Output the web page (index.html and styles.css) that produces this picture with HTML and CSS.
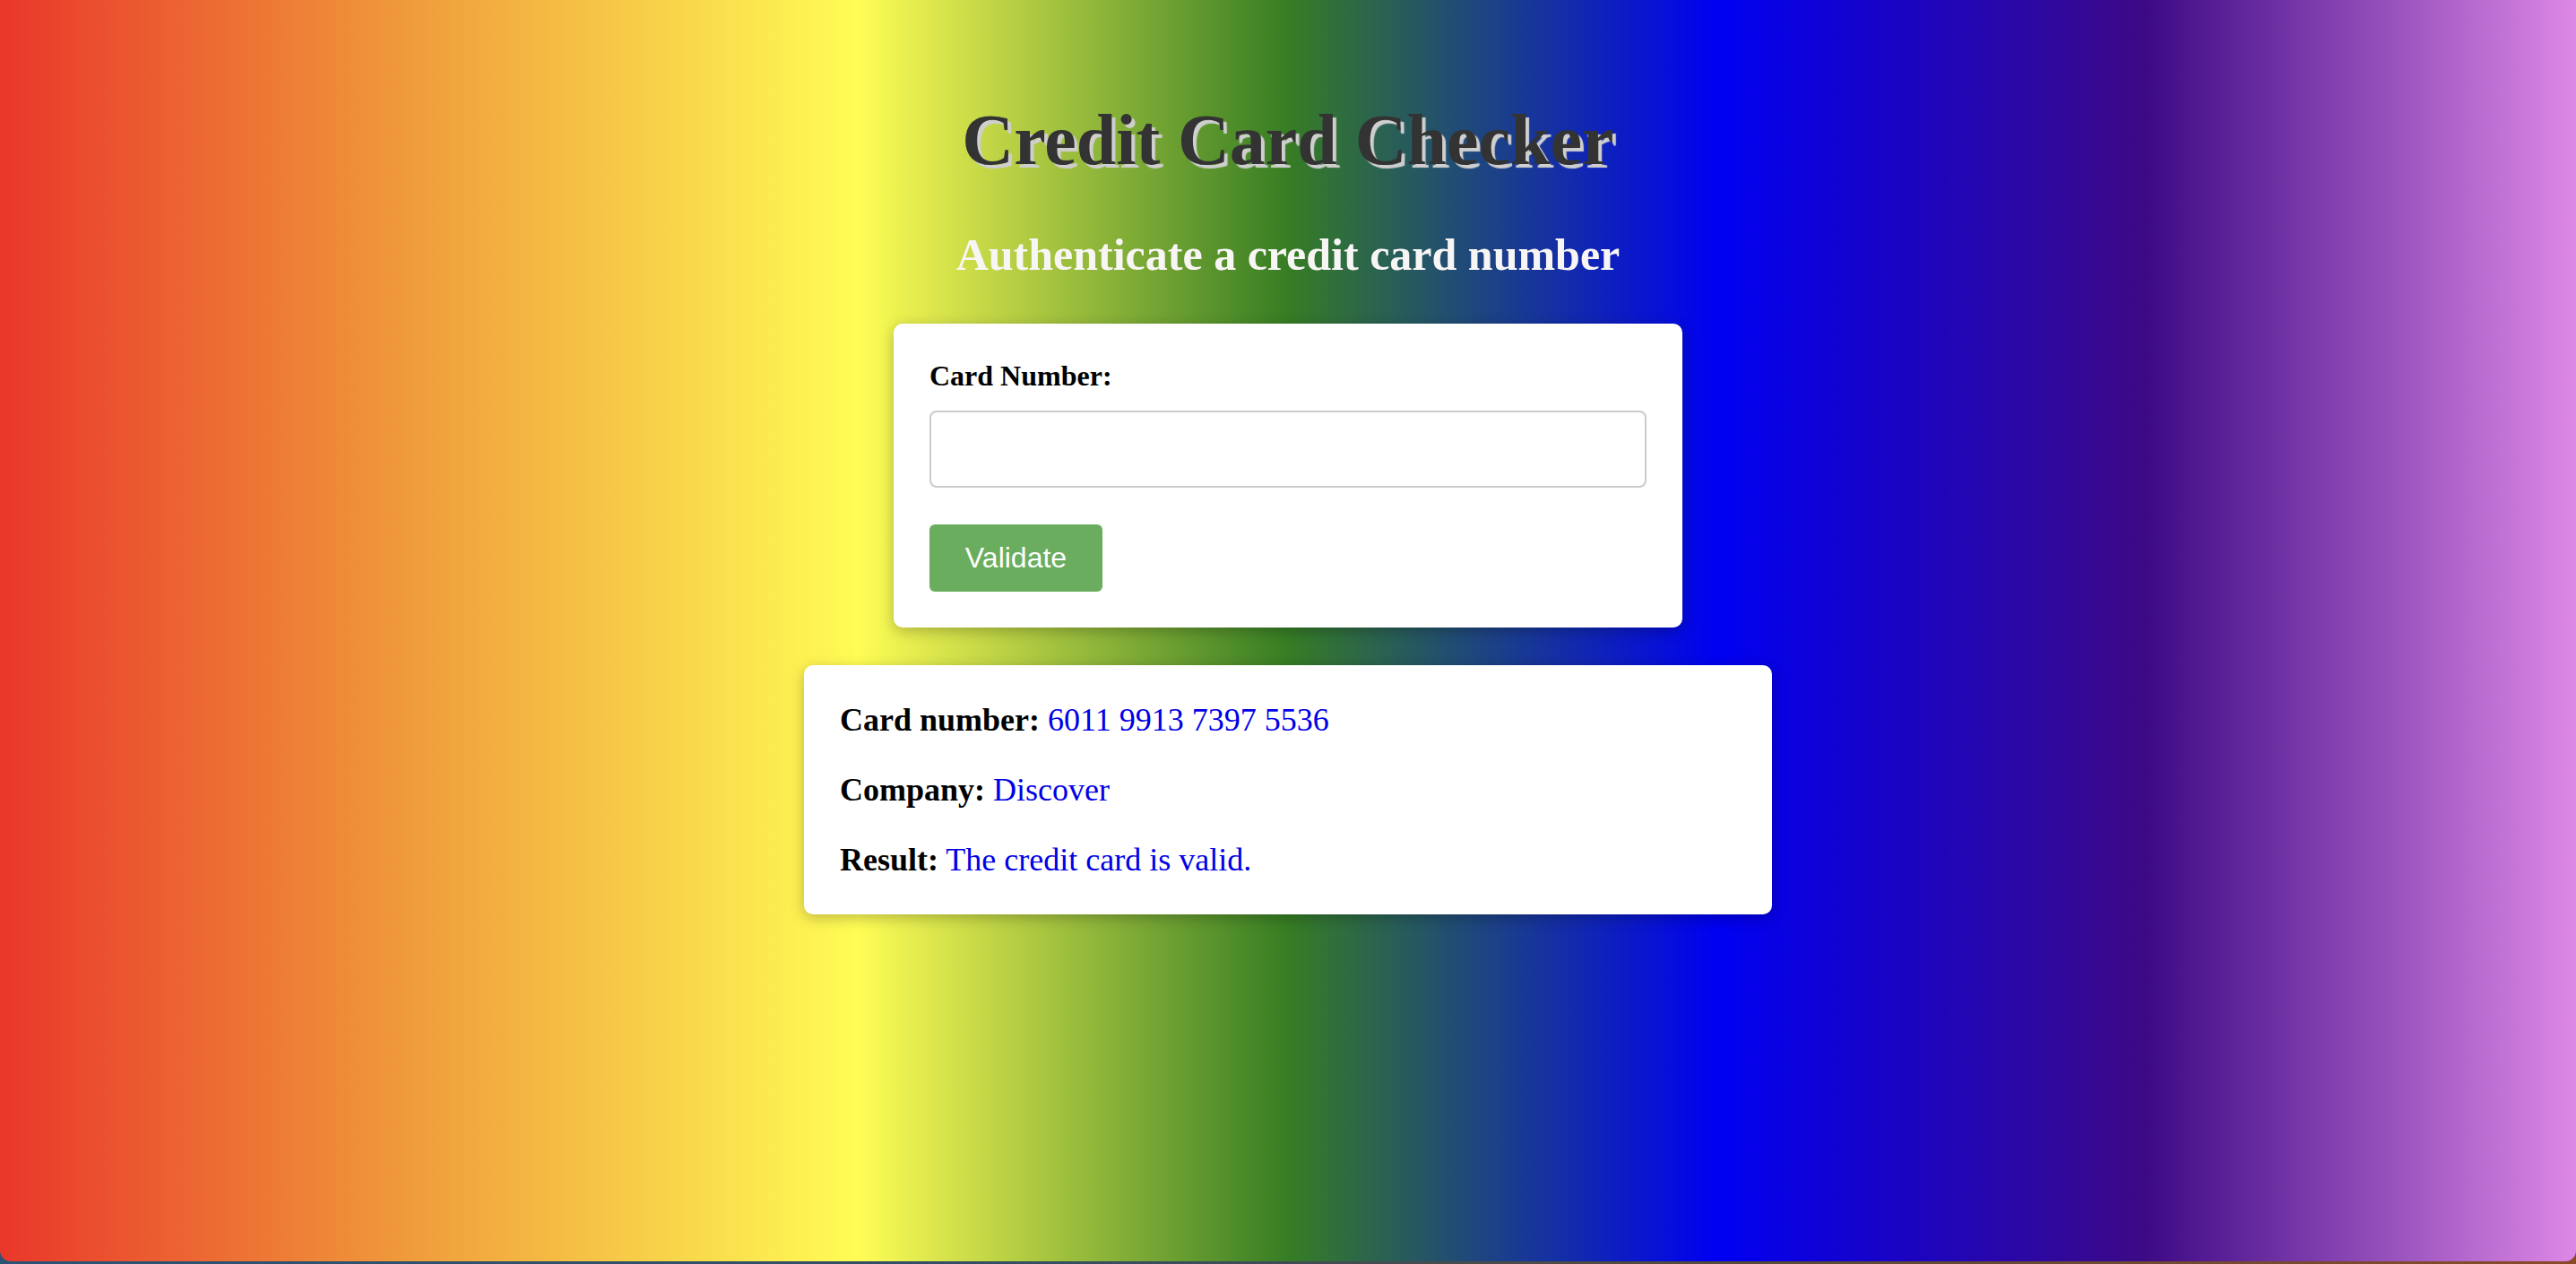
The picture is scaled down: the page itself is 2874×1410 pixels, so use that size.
FILE: index.html
```html
<!DOCTYPE html>
<html lang="en">
<head>
<meta charset="utf-8">
<title>Credit Card Checker</title>
<link rel="stylesheet" href="styles.css">
</head>
<body>
<main class="page">
  <h1 class="title">Credit Card Checker</h1>
  <h2 class="subtitle">Authenticate a credit card number</h2>
  <form class="card form-card">
    <label class="field-label" for="cc">Card Number:</label>
    <input class="field-input" id="cc" type="text">
    <button class="btn" type="button">Validate</button>
  </form>
  <section class="card result-card">
    <p class="row"><strong>Card number:</strong> <span class="val">6011 9913 7397 5536</span></p>
    <p class="row"><strong>Company:</strong> <span class="val">Discover</span></p>
    <p class="row"><strong>Result:</strong> <span class="val">The credit card is valid.</span></p>
  </section>
</main>
</body>
</html>
```
FILE: styles.css
```css
html {
  margin: 0;
  height: 1410px;
  background: linear-gradient(to right, #2c5275, #344e63 40%, #5a4a3a 70%, #8b4a2a);
}
body {
  margin: 0;
  height: 1407px;
  overflow: hidden;
  border-radius: 0 0 12px 12px;
  font-family: "Liberation Serif", "Times New Roman", serif;
  background: linear-gradient(to right,
    #e9372a 0%,
    #f0a03c 16.67%,
    #fffd55 33.33%,
    #367d24 50%,
    #0000f2 66.67%,
    #3d0a85 83.33%,
    #dd88e6 100%);
}
.page {
  display: flex;
  flex-direction: column;
  align-items: center;
  padding-top: 110px;
}
.title {
  margin: 0;
  font-size: 80px;
  line-height: 92px;
  font-weight: bold;
  color: #333;
  text-shadow: 4px 4px 1px #cfcfcf;
}
.subtitle {
  margin: 53px 0 0;
  font-size: 50px;
  line-height: 58px;
  font-weight: bold;
  color: #f8f5f5;
}
.card {
  background: #fff;
  border-radius: 10px;
  box-sizing: border-box;
  padding: 40px;
  box-shadow: 0 4px 16px rgba(0, 0, 0, 0.25);
  text-align: left;
}
.form-card {
  margin-top: 48px;
  width: 880px;
  display: flex;
  flex-direction: column;
  align-items: flex-start;
}
.field-label {
  font-size: 32px;
  line-height: 37px;
  font-weight: bold;
  color: #000;
}
.field-input {
  margin: 20px 0 0;
  width: 100%;
  height: 86px;
  box-sizing: border-box;
  border: 2px solid #cbcbcb;
  border-radius: 8px;
  font-size: 32px;
  padding: 0 20px;
  background: #fff;
}
.btn {
  margin-top: 41px;
  width: 193px;
  height: 75px;
  border: none;
  border-radius: 6px;
  background: #6aad5e;
  color: #fff;
  font-family: "Liberation Sans", Arial, sans-serif;
  font-size: 32px;
  padding: 0;
}
.result-card {
  margin-top: 42px;
  width: 1080px;
  display: flex;
  flex-direction: column;
  gap: 36px;
}
.row {
  margin: 0;
  font-size: 36px;
  line-height: 42px;
  color: #000;
}
.val {
  color: #0000e6;
}
```
